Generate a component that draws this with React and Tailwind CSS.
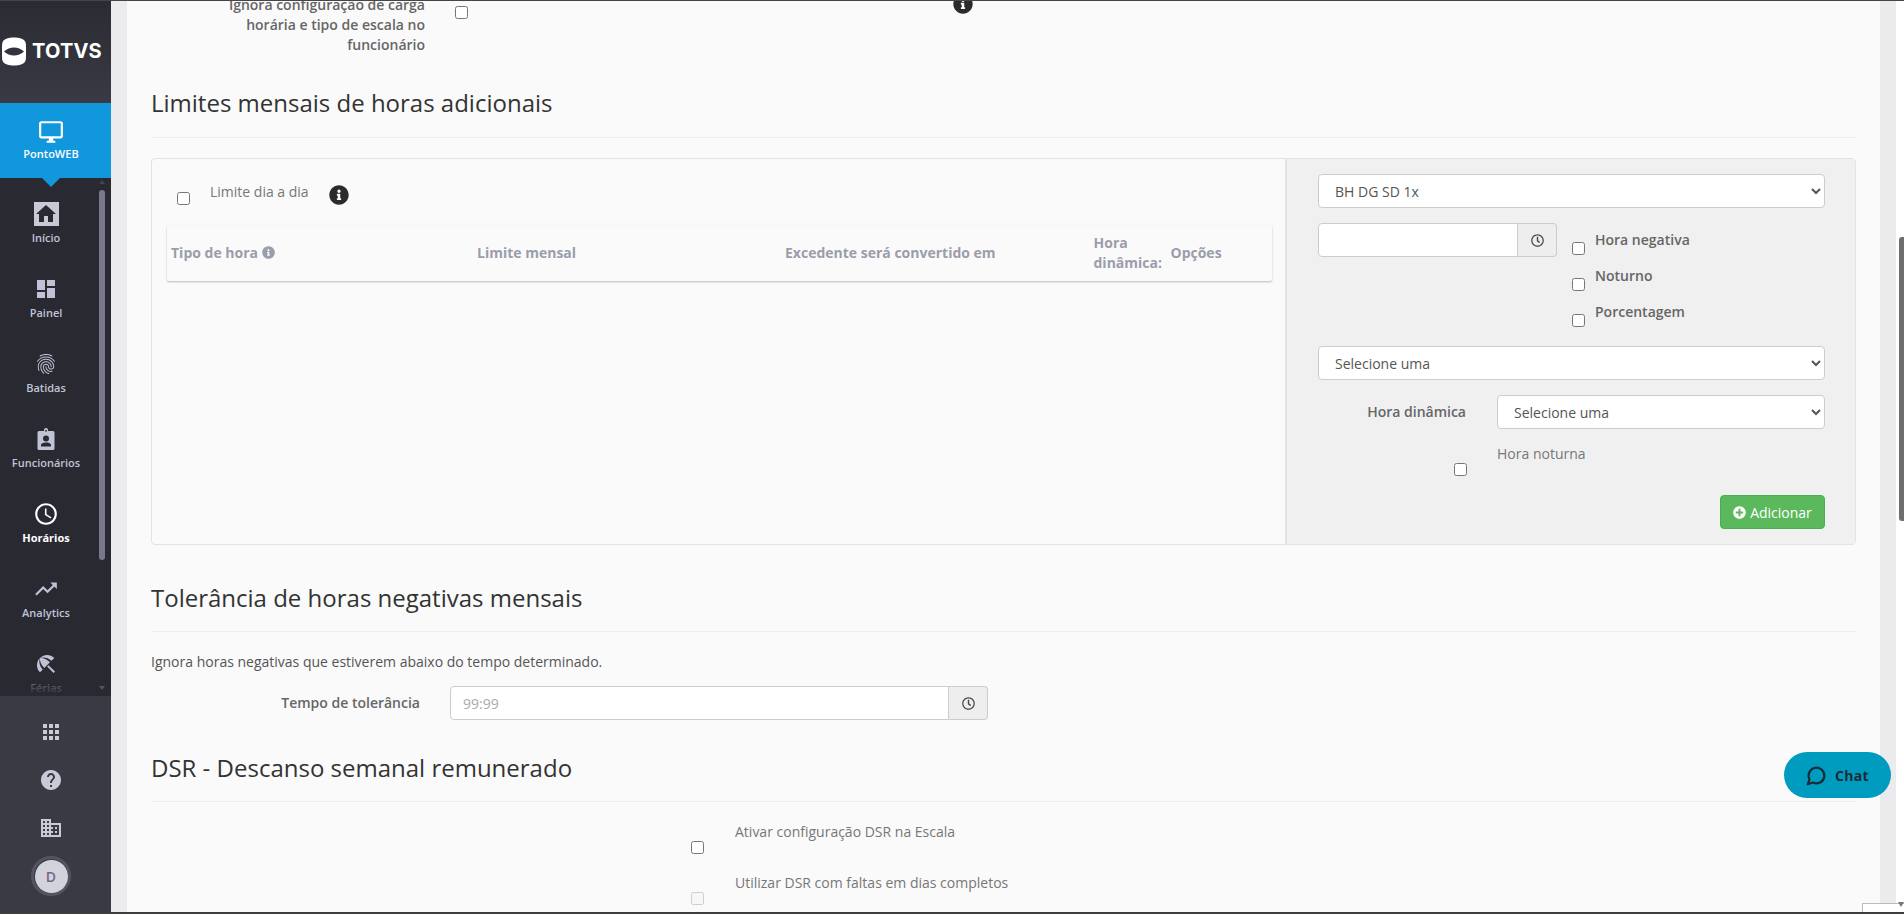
import React from 'react';
import {
  MdOutlineDesktopWindows,
  MdHome,
  MdDashboard,
  MdFingerprint,
  MdAccessTime,
  MdTrendingUp,
  MdBeachAccess,
  MdApps,
  MdHelp,
  MdDomain,
} from 'react-icons/md';
import { FaInfoCircle, FaPlusCircle, FaRegClock } from 'react-icons/fa';
import { LuMessageCircle } from 'react-icons/lu';

const BadgeIcon = () => (
  <svg width="24" height="24" viewBox="0 0 24 24" fill="currentColor">
    <path
      fillRule="evenodd"
      d="M5 4h5V3a2 2 0 0 1 4 0v1h5a1.5 1.5 0 0 1 1.500 1.500v16A1.500 1.500 0 0 1 19 23H5a1.500 1.500 0 0 1-1.500-1.500v-16A1.500 1.500 0 0 1 5 4Zm7 4.500a3 3 0 1 0 0 6 3 3 0 0 0 0-6ZM7 19.500h10v-1.600c0-1.500-3.300-2.300-5-2.300s-5 .8-5 2.300v1.600ZM11 4.500h2V3.200h-2v1.300Z"
    />
  </svg>
);

const TotvsMark = () => (
  <svg width="24" height="29" viewBox="0 0 24 29" className="shrink-0">
    <path
      fill="#fff"
      fillRule="evenodd"
      d="M5 1.500C9 .2 15 .2 19 1.500c2.500.8 4.500 2.500 4.800 5 .4 5 .4 11 0 16-.3 2.500-2.300 4.200-4.800 5-4 1.300-10 1.300-14 0-2.500-.8-4.500-2.500-4.800-5-.4-5-.4-11 0-16 .3-2.500 2.300-4.200 4.800-5ZM2 14.500c3 2.800 6.200 4 10 4s7-1.200 10-4c-3-2.800-6.200-4-10-4s-7 1.200-10 4Z"
    />
  </svg>
);

const navItems = [
  { label: 'Início', icon: <span className="flex w-[25px] h-[24px] items-center justify-center bg-[#c9c9d6] text-[#292932]"><MdHome size={24} /></span> },
  { label: 'Painel', icon: <MdDashboard size={24} /> },
  { label: 'Batidas', icon: <MdFingerprint size={24} /> },
  { label: 'Funcionários', icon: <BadgeIcon /> },
  { label: 'Horários', icon: <MdAccessTime size={26} />, active: true },
  { label: 'Analytics', icon: <MdTrendingUp size={26} /> },
  { label: 'Férias', icon: <MdBeachAccess size={24} /> },
];

const Sidebar = () => (
  <aside className="relative flex w-[111px] shrink-0 flex-col">
    <div className="flex h-[102px] items-center gap-[6px] bg-gradient-to-b from-[#2b2b33] to-[#3a3a45] pl-[2px] pb-[2px]">
      <TotvsMark />
      <span className="text-[20px] leading-none font-bold tracking-[0.2px] text-white font-['Inter',sans-serif]">TOTVS</span>
    </div>

    <div className="relative z-10 flex h-[75px] w-full flex-col items-center bg-[#1097dc] pt-[16px] pr-[9px] text-white">
      <MdOutlineDesktopWindows size={26} />
      <span className="mt-[1px] text-[11px] leading-[16px] font-semibold">PontoWEB</span>
      <span className="absolute top-full left-[42px] h-0 w-0 border-x-[9px] border-t-[9px] border-x-transparent border-t-[#1097dc]" />
    </div>

    <nav className="relative h-[518px] overflow-hidden bg-[#292932] pt-[24px]">
      {navItems.map((item) => (
        <div
          key={item.label}
          className={`flex h-[75px] w-[92px] flex-col items-center ${item.active ? 'text-white' : 'text-[#c0c3d6]'}`}
        >
          <span className="flex h-[24px] items-center justify-center">{item.icon}</span>
          <span className={`mt-[4px] text-[11px] leading-[16px] ${item.active ? 'font-bold' : 'font-semibold'}`}>{item.label}</span>
        </div>
      ))}
      <div className="absolute inset-x-0 bottom-0 h-[20px] bg-gradient-to-b from-[#292932]/40 to-[#292932]" />
      <div className="absolute top-[2px] right-[6px] bottom-0 flex w-[6px] flex-col items-center">
        <span className="h-0 w-0 border-x-[3px] border-b-[4px] border-x-transparent border-b-[#44444f]" />
        <span className="mt-[6px] h-[370px] w-[6px] rounded-[3px] bg-[#77778e]" />
        <span className="mt-[126px] h-0 w-0 border-x-[3px] border-t-[4px] border-x-transparent border-t-[#55555f]" />
      </div>
    </nav>

    <div className="flex flex-1 flex-col items-center bg-[#3a3a45] pt-[24px] pr-[9px] text-[#c9c9d8]">
      <MdApps size={24} />
      <MdHelp size={24} className="mt-[24px]" />
      <MdDomain size={24} className="mt-[24px]" />
      <div className="mt-[16px] flex h-[40px] w-[40px] items-center justify-center rounded-full border-[3px] border-[#54545f]">
        <span className="flex h-[33px] w-[33px] shrink-0 items-center justify-center rounded-full bg-[#d3d3de] text-[14px] font-semibold text-[#6d6d7c]">D</span>
      </div>
    </div>
  </aside>
);

const SectionTitle = ({ children, className }) => (
  <h3 className={`border-b border-[#eeeeee] pb-[20px] text-[24px] leading-[26px] font-normal text-[#333333] ${className}`}>{children}</h3>
);

const Select = ({ value, className = '' }) => (
  <select
    defaultValue={value}
    className={`h-[34px] rounded-[4px] border border-[#cccccc] bg-white pl-[12px] text-[14px] text-[#555555] ${className}`}
  >
    <option>{value}</option>
  </select>
);

const ClockAddon = () => (
  <span className="flex w-[39px] shrink-0 items-center justify-center rounded-r-[4px] border border-l-0 border-[#cccccc] bg-[#eeeeee] text-[#444444]">
    <FaRegClock size={13} />
  </span>
);

const RightCheck = ({ label }) => (
  <div className="flex h-[20px] items-start">
    <input type="checkbox" className="mt-[12px]" />
    <span className="ml-[10px] text-[14px] leading-[20px] font-semibold text-[#666666]">{label}</span>
  </div>
);

const LimitsPanel = () => (
  <div className="mt-[20px] flex h-[387px] rounded-[4px] border border-[#e3e3e3]">
    <div className="w-[1135px] shrink-0 border-r-2 border-[#e3e3e3]">
      <div className="flex h-[66px] items-start pt-[23px] pl-[25px]">
        <input type="checkbox" className="mt-[10px]" />
        <span className="ml-[20px] text-[14px] leading-[20px] text-[#777777]">Limite dia a dia</span>
        <FaInfoCircle size={20} className="mt-[3px] ml-[20px] text-[#2b2b2b]" />
      </div>
      <div className="ml-[15px] grid h-[56px] w-[1105px] grid-cols-[306px_308px_308.500px_77px_1fr] items-center rounded-[2px] pl-[4px] text-[14px] leading-[20px] font-bold text-[#9b9dab] shadow-[0_1px_2px_rgba(0,0,0,0.25)]">
        <span className="flex items-center gap-[4px]">
          Tipo de hora <FaInfoCircle size={13} className="mb-[1px]" />
        </span>
        <span>Limite mensal</span>
        <span>Excedente será convertido em</span>
        <span>Hora dinâmica:</span>
        <span>Opções</span>
      </div>
    </div>

    <div className="flex flex-1 flex-col bg-[#f0f0f0] pt-[15px] pr-[30px] pl-[31px]">
      <Select value="BH DG SD 1x" className="w-full" />
      <div className="mt-[15px] flex h-[123px] items-start">
        <div className="flex h-[34px] w-[239px]">
          <input className="w-[200px] rounded-l-[4px] border border-[#cccccc] bg-white" />
          <ClockAddon />
        </div>
        <div className="mt-[7px] ml-[15px] flex flex-col gap-[16px]">
          <RightCheck label="Hora negativa" />
          <RightCheck label="Noturno" />
          <RightCheck label="Porcentagem" />
        </div>
      </div>
      <Select value="Selecione uma" className="w-full" />
      <div className="mt-[15px] flex items-center">
        <span className="w-[148px] text-right text-[14px] leading-[20px] font-semibold text-[#666666]">Hora dinâmica</span>
        <Select value="Selecione uma" className="ml-[31px] flex-1" />
      </div>
      <div className="mt-[15px] flex h-[51px] items-start">
        <div className="flex w-[149px] justify-end pt-[19px]">
          <input type="checkbox" />
        </div>
        <span className="ml-[30px] text-[14px] leading-[20px] text-[#777777]">Hora noturna</span>
      </div>
      <button className="flex h-[34px] w-[105px] items-center justify-center gap-[4px] self-end rounded-[4px] border border-[#4cae4c] bg-[#5cb85c] text-[14px] text-white">
        <FaPlusCircle size={13} /> Adicionar
      </button>
    </div>
  </div>
);

const DsrRow = ({ label, disabled }) => (
  <div className="flex h-[51px] items-start pl-[540px]">
    <input type="checkbox" disabled={disabled} className="mt-[19px]" />
    <span className="ml-[31px] text-[14px] leading-[20px] text-[#777777]">{label}</span>
  </div>
);

const Content = () => (
  <main className="flex min-w-0 flex-1 overflow-hidden bg-[#ebebed] pl-[16px]">
    <div className="-mt-[6px] h-fit w-[1753px] shrink-0 bg-[#fafafa] pr-[24px] pb-[40px] pl-[24px]">
      <div className="relative flex h-[60px] items-start">
        <label className="w-[274px] text-right text-[14px] leading-[20px] font-semibold text-[#666666]">
          Ignora configuração de carga
          <br />
          horária e tipo de escala no
          <br />
          funcionário
        </label>
        <input type="checkbox" className="mt-[11px] ml-[30px]" />
        <FaInfoCircle size={20} className="-mt-px ml-[485px] text-[#2b2b2b]" />
      </div>

      <SectionTitle className="mt-[35px] pb-[21px]">Limites mensais de horas adicionais</SectionTitle>
      <LimitsPanel />

      <SectionTitle className="mt-[40px]">Tolerância de horas negativas mensais</SectionTitle>
      <p className="mt-[20px] text-[14px] leading-[20px] text-[#555555]">Ignora horas negativas que estiverem abaixo do tempo determinado.</p>
      <div className="mt-[14px] flex items-center">
        <span className="w-[269px] text-right text-[14px] leading-[20px] font-semibold text-[#666666]">Tempo de tolerância</span>
        <div className="ml-[30px] flex h-[34px] w-[538px]">
          <input
            placeholder="99:99"
            className="min-w-0 flex-1 rounded-l-[4px] border border-[#cccccc] bg-white px-[12px] text-[14px] placeholder:text-[#aaaaaa]"
          />
          <ClockAddon />
        </div>
      </div>

      <SectionTitle className="mt-[35px]">DSR - Descanso semanal remunerado</SectionTitle>
      <div className="mt-[20px]">
        <DsrRow label="Ativar configuração DSR na Escala" />
        <DsrRow label="Utilizar DSR com faltas em dias completos" disabled />
      </div>
    </div>

    <div className="w-[16px] shrink-0" />
    <div className="w-[8px] shrink-0 bg-white">
      <div className="mt-[236px] ml-[3px] h-[284px] w-[5px] rounded-l-[3px] bg-[#6e6e6e]" />
    </div>
  </main>
);

export default function App() {
  return (
    <div className="relative flex h-[914px] w-[1904px] flex-col overflow-hidden font-['Open_Sans',sans-serif]">
      <div className="h-px shrink-0 bg-[#454545]" />
      <div className="flex min-h-0 flex-1">
        <Sidebar />
        <Content />
      </div>
      <div className="h-[2px] shrink-0 bg-[#3c3c3c]" />

      <button className="absolute top-[752px] left-[1784px] flex h-[46px] w-[107px] items-center justify-center gap-[8px] rounded-full bg-[#009cbf] text-[14px] font-bold tracking-[0.3px] text-[#1c2b3a]">
        <LuMessageCircle size={21} strokeWidth={2.5} /> Chat
      </button>

      <div className="absolute top-[903px] left-[1862px] h-[9px] w-[42px] border-t border-l border-[#bbbbbb] bg-white">
        <span className="absolute top-[-2px] right-0 h-0 w-0 border-x-[3px] border-t-[5px] border-x-transparent border-t-[#777777]" />
      </div>
    </div>
  );
}
